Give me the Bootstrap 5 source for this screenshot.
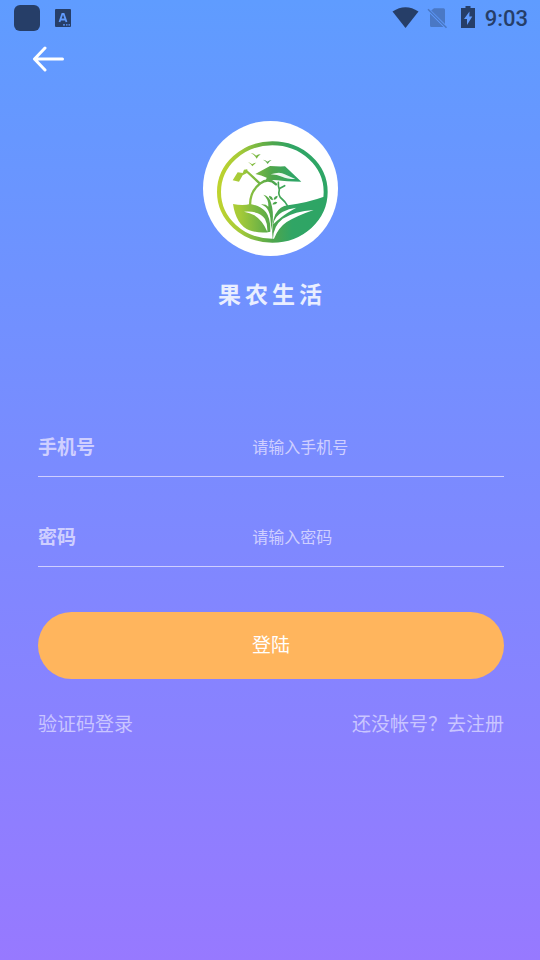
<!DOCTYPE html>
<html lang="zh-CN">
<head>
<meta charset="utf-8">
<meta name="viewport" content="width=device-width, initial-scale=1">
<title>果农生活</title>
<link href="https://cdn.jsdelivr.net/npm/bootstrap@5.3.0/dist/css/bootstrap.min.css" rel="stylesheet">
<style>
body {
  font-family: "Noto Sans CJK SC", sans-serif;
  background: linear-gradient(#5f9cff, #9779ff) no-repeat;
  color: #cfcfff;
  font-size: 19px;
  line-height: 28px;
}
.status-bar { height: 36px; padding: 0 12px 0 14px; color: #263e68; }
.app-chip { width: 26px; height: 26px; border-radius: 6px; background: #263e68; }
.status-left { gap: 15px; }
.clock { font: 500 22px/28px Roboto, sans-serif; padding-top: 2px; }
.back-btn { margin: 10px 0 0 32px; line-height: 0; }
.brand { margin-top: 49px; }
.brand-name { margin: 21px 0 0; gap: 4px; font-size: 23px; line-height: 32px; font-weight: 700; color: #e9eeff; }
.login-form { padding: 108px 36px 0 38px; }
.field { height: 60px; padding-bottom: 2px; border-bottom: 1px solid #cfcfff; margin-bottom: 30px; }
.field label { width: 46%; font-weight: 700; }
.field input { font-size: 16px; line-height: 28px; color: #fff; background: none; outline-offset: 4px; }
.field input::placeholder { color: #cfcfff; opacity: 1; }
.login-btn, .login-btn:hover { height: 67px; margin-top: 15px; border: 0; background: #ffb55d; color: #fff; font-size: 19px; }
.login-btn { padding: 0 0 2px; }
.links { margin-top: 30px; }
.links a { color: #c9c5ff; }
</style>
<script src="https://cdn.jsdelivr.net/npm/bootstrap@5.3.0/dist/js/bootstrap.bundle.min.js"></script>
</head>
<body class="min-vh-100">
<header>
  <div class="status-bar d-flex align-items-center justify-content-between">
    <div class="status-left d-flex align-items-center">
      <span class="app-chip"></span>
      <svg width="16" height="18" viewBox="0 0 16 18" aria-hidden="true">
        <rect width="16" height="18" rx="1" fill="#263e68"/>
        <path d="M4.500 13 7.300 5h1.400l2.800 8M5.600 10.500h4.800" fill="none" stroke="#609bff" stroke-width="1.800"/>
        <path d="M8 15.800h2m1 0h1.500m1 0h1.500" stroke="#609bff" stroke-width="1.300"/>
      </svg>
    </div>
    <div class="d-flex align-items-center">
      <svg width="96" height="28" viewBox="389 4 96 28" aria-hidden="true">
        <path d="M392.500 11.500Q405.500 3 418.500 11.500L405.500 28Z" fill="#263e68"/>
        <path d="M434 8.300h9.500q1.500 0 1.500 1.500v14.200L431.200 10.600ZM430 13.500 443.500 27H431.500q-1.500 0-1.500-1.500Z" fill="#4a78c5"/>
        <path d="M428 9.300 446.500 27.800" stroke="#4a78c5" stroke-width="1.600"/>
        <path d="M465.500 6h5v2h4.500v20h-14V8h4.500Z" fill="#263e68"/>
        <path d="M469.500 11.500 464 19h3v6l5.300-8.500h-3Z" fill="#609bff"/>
      </svg>
      <span class="clock">9:03</span>
    </div>
  </div>
  <button type="button" class="back-btn btn p-0 border-0 d-block" aria-label="返回">
    <svg width="32" height="26" viewBox="0 0 32 26" fill="none" stroke="#fff" stroke-width="3" stroke-linecap="round" stroke-linejoin="round"><path d="M13 2 2.500 13 13 24M2.500 13H30.500"/></svg>
  </button>
</header>
<main>
  <div class="brand d-flex flex-column align-items-center">
    <svg width="135" height="135" viewBox="9 14 405 405" role="img" aria-label="果农生活标志">
      <defs>
        <linearGradient id="leafTone" gradientUnits="userSpaceOnUse" x1="55" y1="0" x2="380" y2="0">
          <stop offset="0" stop-color="#bfd32e"/><stop offset=".2" stop-color="#a5ca38"/><stop offset=".5" stop-color="#4fa64c"/><stop offset=".68" stop-color="#30a565"/><stop offset="1" stop-color="#2da565"/>
        </linearGradient>
      </defs>
      <circle cx="211.500" cy="216.500" r="202.500" fill="#fff"/>
      <g fill="none" stroke="url(#leafTone)" stroke-linecap="round">
        <ellipse cx="217" cy="227" rx="160" ry="146" stroke-width="12"/>
        <path d="M139 164 179 201" stroke-width="7"/>
        <path d="M150 266Q150 225 180 202Q206 182 228 204" stroke-width="7"/>
        <path d="M235 198Q234 207 238 220Q233 238 246 248Q256 256 262 268M240 216 254 208" stroke-width="5"/>
      </g>
      <g fill="url(#leafTone)">
        <path d="M152 110q10 1 16 8q6-4 14-4q-8 5-12 13q-7-12-18-17ZM189 130q9 1 13 6q6-5 13-5q-8 5-12 12q-5-9-14-13ZM144 138q8 1 12 6q6-5 13-5q-8 5-12 11q-5-9-13-12Z"/>
        <path d="M98 192 113 168 128 170 132 160 142 159 141 170 128 177 117 196Z"/>
        <path d="M166 173 210 149Q235 151 255 150L304 196Q255 196 232 192Q214 189 197 194L200 184Q184 177 166 173Z"/>
        <path d="M99 263Q128 269 151 263Q183 269 198 288Q212 306 211 346Q183 353 148 342Q108 325 99 263Z"/>
        <path d="M218 368Q213 323 226 294Q240 268 264 267Q321 260 376 240Q373 303 326 340Q286 375 218 368Z"/>
        <path d="M190 235Q208 239 213 259Q221 284 218 317L213 342Q213 297 205 283Q198 270 183 264Q198 263 205 271Q207 249 190 235Z"/>
        <path d="M207 238q11 1 12 14q-12-3-12-14ZM221 250q0-10 12-12q-1 11-12 12ZM217 264q5-11 15-6q-4 9-15 6Z"/>
      </g>
      <path d="M132 286Q180 283 195 308Q203 323 202 346Q187 312 163 297Q150 289 132 286Z" fill="#fff"/>
      <path d="M219 367Q220 329 248 307Q284 285 341 281Q294 297 260 317Q235 334 222 367Z" fill="#fff"/>
      <path d="M220 324Q224 300 247 287Q266 276 289 274Q261 289 245 302Q228 315 220 324Z" fill="#fff"/>
      <path d="M212 174Q240 165 254 174L286 188Q260 188 246 181Q232 175 212 174ZM246 178Q248 170 254 174L268 182Q252 182 246 178Z" fill="#fff" fill-opacity=".9"/>
    </svg>
    <h1 class="brand-name d-flex"><span>果</span><span>农</span><span>生</span><span>活</span></h1>
  </div>
  <form class="login-form">
    <div class="field d-flex align-items-center">
      <label class="flex-shrink-0" for="phone">手机号</label>
      <input class="flex-grow-1 border-0 p-0 w-50" id="phone" type="tel" placeholder="请输入手机号">
    </div>
    <div class="field d-flex align-items-center">
      <label class="flex-shrink-0" for="password">密码</label>
      <input class="flex-grow-1 border-0 p-0 w-50" id="password" type="password" placeholder="请输入密码">
    </div>
    <button type="submit" class="login-btn btn rounded-pill w-100">登陆</button>
    <div class="links d-flex justify-content-between">
      <a class="text-decoration-none" href="#code">验证码登录</a>
      <a class="text-decoration-none" href="#register">还没帐号？去注册</a>
    </div>
  </form>
</main>
</body>
</html>
